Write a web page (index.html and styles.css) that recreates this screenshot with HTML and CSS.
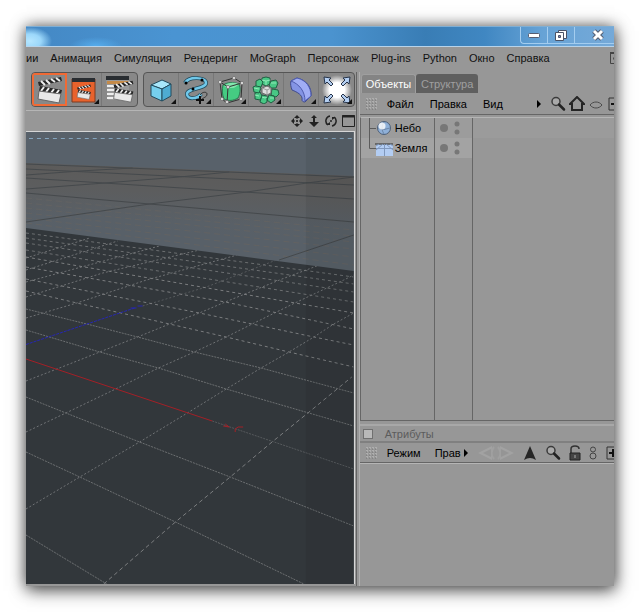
FILE: index.html
```html
<!DOCTYPE html>
<html lang="ru">
<head>
<meta charset="utf-8">
<title>3D</title>
<link rel="stylesheet" href="styles.css">
</head>
<body>
<svg class="defs" aria-hidden="true">
  <defs>
    <symbol id="lens" viewBox="0 0 16 16"><circle cx="6" cy="5.500" r="4" fill="#a9a9a9" stroke="#3b3b3b" stroke-width="1.500"/><path d="M9 8.500l5 5" stroke="#222" stroke-width="2.500" stroke-linecap="round"/></symbol>
    <symbol id="plus" viewBox="0 0 16 16"><path d="M2 2h13v12H2z" fill="none" stroke="#333"/><path d="M4 8h8M8 4v8" stroke="#111" stroke-width="2"/></symbol>
    <symbol id="grip" viewBox="0 0 12 12"><path d="M1 1h11M1 4h11M1 7h11M1 10h11" stroke="#c4c4c4" stroke-dasharray="2 1"/><path d="M1 2h11M1 5h11M1 8h11M1 11h11" stroke="#707070" stroke-dasharray="1 2"/></symbol>
    <symbol id="more" viewBox="0 0 6 8"><path d="M1 0l4 4-4 4z" fill="#000"/></symbol>
    <symbol id="slate" viewBox="0 0 28 28">
      <path d="M2 6L25 1l1 4L3 10z" fill="#262626"/><path d="M5 5l4 4M10 4l4 4M15 3l4 3M20 2l4 3" stroke="#eee" stroke-width="2"/>
      <path d="M4 10l22 4-1 4L3 15z" fill="#262626"/><path d="M8 11l-3 4M13 12l-3 4M18 13l-3 4M23 14l-3 4" stroke="#eee" stroke-width="2"/>
      <path d="M3 15l22 3-2 9-21-4z" fill="#e8e8e8" stroke="#666"/>
    </symbol>
  </defs>
</svg>
<main class="window">
  <header class="titlebar">
    <div class="caption">
      <button aria-label="Свернуть"><svg width="14" height="12" viewBox="0 0 14 12"><rect x="1.500" y="4.500" width="11" height="4" rx="1" fill="#fff" stroke="#555d70"/></svg></button>
      <button aria-label="Развернуть"><svg width="14" height="13" viewBox="0 0 14 13"><path d="M4.500 1.500h8v8h-8z" fill="#fff" stroke="#4a5266"/><path d="M1.500 3.500h8v8h-8z" fill="#fff" stroke="#4a5266"/><path d="M4.500 6.500h2v2h-2z" fill="#88b" stroke="#4a5266"/></svg></button>
      <button class="close" aria-label="Закрыть"><svg width="14" height="12" viewBox="0 0 14 12"><path d="M3 2l8 8M11 2l-8 8" stroke="#555d70" stroke-width="5"/><path d="M3 2l8 8M11 2l-8 8" stroke="#fff" stroke-width="3"/></svg></button>
    </div>
  </header>
  <nav class="menubar">
    <button>ии</button><button>Анимация</button><button>Симуляция</button><button>Рендеринг</button><button>MoGraph</button><button>Персонаж</button><button>Plug-ins</button><button>Python</button><button>Окно</button><button>Справка</button>
    <svg class="edge" width="14" height="14" viewBox="0 0 14 14"><path d="M1.500 2.500h12v10h-12z" fill="none" stroke="#444"/><path d="M1 2h12" stroke="#444" stroke-width="2"/><path d="M7 5L4 7.500 7 10" fill="none" stroke="#444"/></svg>
  </nav>
  <div class="work">
    <section class="left">
      <div class="tools">
        <div class="group">
          <button class="on" aria-label="Рендер вида"><svg width="28" height="28"><use href="#slate"/></svg></button>
          <button class="drop" aria-label="Рендер в окно"><svg width="28" height="28" viewBox="0 0 28 28"><path d="M2 3h23v23H2z" fill="#e8622c" stroke="#7d3a20"/><path d="M2 2h23v4H2z" fill="#292d31"/><use href="#slate" x="6" y="8" width="16" height="16"/></svg></button>
          <button aria-label="Настройки рендера"><svg width="30" height="30" viewBox="0 0 30 30"><path d="M1 3h23v22H3z" fill="#999"/><path d="M1 1h23v4H1z" fill="#292d31"/><path d="M2 6h22v3H2z" fill="#c48a48"/><path d="M2 11h7M2 15h7M2 19h7M2 23h7" stroke="#eee" stroke-width="2"/><use href="#slate" x="7" y="4" width="23" height="25"/></svg></button>
        </div>
        <div class="group wide">
          <button class="drop" aria-label="Куб"><svg width="28" height="28" viewBox="0 0 28 28"><g stroke="#234b5c" stroke-linejoin="round"><path d="M4 9l11-5 9 4-9 5z" fill="#a8e7fa"/><path d="M4 9l11 4v12L4 20z" fill="#76d0ee"/><path d="M15 13l9-5v12l-9 5z" fill="#4eacd2"/></g></svg></button>
          <button class="drop" aria-label="Сплайн"><svg width="28" height="28" viewBox="0 0 28 28"><path d="M3 7C7 0 24 1 24 7S5 12 5 18s11 5 14 0" fill="none" stroke="#234b5c" stroke-width="4"/><path d="M3 7C7 0 24 1 24 7S5 12 5 18s11 5 14 0" fill="none" stroke="#70c8ea" stroke-width="2.500"/><path d="M18 19c3-4 7-3 7-1 0 4-5 3-7 8" fill="none" stroke="#333"/><path d="M18 20v8M14 24h8" stroke="#111" stroke-width="2"/><circle cx="4" cy="7" r="1.500"/><circle cx="20" cy="4" r="1.500"/><circle cx="11" cy="13" r="1.500"/></svg></button>
          <button class="drop" aria-label="Генератор"><svg width="28" height="28" viewBox="0 0 28 28"><path d="M6 9c5-3 10-3 16-1 2 5 1 10-1 14-5 3-9 3-14 1C5 18 5 14 6 9z" fill="#45cb82" stroke="#287b51"/><path d="M7 10c5 2 6 2 8 2 3 0 5-2 7-4-5-2-11-2-15 2z" fill="#82e8ad"/><path d="M3 6l14-4 8 5-14 4zM3 6l2 17 5 4 14-4 1-16M11 11l-1 16" fill="none" stroke="#333"/><g fill="#fff" stroke="#777"><circle cx="3" cy="6" r="1.500"/><circle cx="17" cy="2" r="1.500"/><circle cx="25" cy="7" r="1.500"/><circle cx="11" cy="11" r="1.500"/><circle cx="5" cy="23" r="1.500"/><circle cx="10" cy="26" r="1.500"/><circle cx="24" cy="23" r="1.500"/></g></svg></button>
          <button class="drop" aria-label="Массив"><svg width="28" height="28" viewBox="0 0 28 28"><g fill="#48c885" stroke="#215f43" stroke-linejoin="round"><path d="M10 2l4-1 4 1v6l-4 2-4-2z"/><path d="M19 5l5-1 2 3-2 5-5 0-2-3z"/><path d="M20 13l6 1 1 4-3 3-5-2z"/><path d="M17 19l5 1 1 4-4 3-4-3z"/><path d="M10 19l5 1v6l-3 2-4-2z"/><path d="M3 17l5-1 2 4-2 4-5-1z"/><path d="M1 11l5-2 3 3-2 5-5-1z"/><path d="M4 5l4-2 3 3-2 5-5-1z"/></g><path d="M10 4l4 1 4-1M14 5v4M19 7l5 0M3 19l4 1M2 12l5 1M18 22l4 0M10 21l3 1 2-1" stroke="#92eab8" fill="none"/><path d="M10 12l5-2 4 2v5l-4 2-5-2z" fill="#ddd" stroke="#666"/><path d="M10 12l5 2 4-2M15 14v5" fill="none" stroke="#999"/></svg></button>
          <button class="drop" aria-label="Деформатор"><svg width="28" height="28" viewBox="0 0 28 28"><path d="M4 5l6-3c9 2 15 9 14 18l-6 6c-2 0-3-1-3-2 1-5-5-8-10-10-1-3-2-6-1-9z" fill="#8494e4" stroke="#3f4a8c"/><path d="M4 5l6-3c9 2 14 9 14 18l-6 5C18 15 12 8 4 5z" fill="#a0adf4" stroke="#4f5cae"/></svg></button>
          <button class="drop" aria-label="Окружение"><svg width="30" height="30" viewBox="0 0 30 30"><defs><radialGradient id="glow"><stop offset=".5" stop-color="#fff"/><stop offset="1" stop-color="#fff" stop-opacity="0"/></radialGradient></defs><circle cx="15" cy="15" r="15" fill="url(#glow)"/><g fill="#b4cff2" stroke="#26344a" stroke-linejoin="round"><path id="arr" d="M2 2l7 1-2 2 4 4-2 2-4-4-2 2z"/><use href="#arr" transform="matrix(-1 0 0 1 30 0)"/><use href="#arr" transform="matrix(1 0 0 -1 0 30)"/><use href="#arr" transform="matrix(-1 0 0 -1 30 30)"/></g></svg></button>
        </div>
      </div>
      <div class="viewbar">
        <svg width="12" height="12" viewBox="0 0 12 12"><path d="M6 0l3 3H3zM6 12l3-3H3zM0 6l3-3v6zM12 6L9 3v6z" fill="#222"/><path d="M6 2v8M2 6h8" stroke="#222"/><path d="M4 4h4v4H4z" fill="#999"/><path d="M5 5h2v2H5z" fill="#333"/></svg>
        <svg width="12" height="12" viewBox="0 0 12 12"><path d="M6 0l3 3H7v4h4l-5 5-5-5h4V3H3z" fill="#222"/></svg>
        <svg width="12" height="12" viewBox="0 0 12 12"><path d="M5 1a5 5 0 0 0-2 9M7 11a5 5 0 0 0 2-9" fill="none" stroke="#222" stroke-width="1.500"/><path d="M1 10h4V7zM11 2H7v3z" fill="#222"/><circle cx="6" cy="6" r="1" fill="#222"/></svg>
        <svg width="13" height="12" viewBox="0 0 13 12"><path d="M.5.500h12v11H.5z" fill="none" stroke="#222"/><path d="M0 1.500h13" stroke="#222" stroke-width="2"/></svg>
      </div>
      <svg class="scene" viewBox="26 132 329 452" preserveAspectRatio="none" role="img" aria-label="3D">
        <defs>
          <linearGradient id="haze" x1="30" y1="163" x2="27" y2="228" gradientUnits="userSpaceOnUse"><stop offset="0" stop-color="#5c5b5a"/><stop offset=".35" stop-color="#5c5d5e"/><stop offset=".8" stop-color="#596067"/><stop offset="1" stop-color="#586068"/></linearGradient>
          <clipPath id="floor"><path d="M26 228L355 271V584H26z"/></clipPath>
        </defs>
        <path d="M26 132h329v452H26z" fill="#58616a"/>
        <path d="M26 163L355 176V275L26 230z" fill="url(#haze)"/>
        <path d="M29 138.500h326" stroke="#86a6bf" stroke-dasharray="4 4"/>
        <g fill="none" stroke="#626262" stroke-dasharray="6 4"><path d="M26 198L355 230M26 203L355 236M26 208L355 242M26 213L355 249M26 218L355 257M26 223L355 265"/></g>
        <g fill="none" stroke="#45494c"><path d="M26 164L355 177M26 169L355 185M26 178L245 192 355 199M26 193L150 204 355 222M26 222L150 204 248 192 308 183 355 177M26 189L105 183 180 177 230 172M26 175L80 171 133 168M280 260L355 235"/></g>
        <path d="M26 228L355 271V584H26z" fill="#32373b"/>
        <g clip-path="url(#floor)" fill="none" stroke="#7b7d7f">
          <g stroke-dasharray="2 1" stroke-opacity=".8">
            <path d="M26 535L107 584"/>
            <path d="M26 452L80 477 176 522 305 584"/>
            <path d="M26 397L66 413 140 442 231 477 355 526"/>
            <path d="M213 421L355 469" stroke-opacity=".5"/>
            <path d="M26 330L100 352 159 368 227 389 310 413 355 426"/>
            <path d="M26 309L87 324 138 337 195 352 262 368 355 393"/>
          </g>
          <g stroke-dasharray="3 3">
            <path d="M26 291L77 303 170 324 227 337 290 352 355 367"/>
            <path d="M26 279L200 313 253 324 315 337 355 345"/>
            <path d="M26 267L226 302 355 329"/>
            <path d="M26 257L355 313"/>
            <path d="M26 250L355 302M26 243L355 292M26 238L355 284M26 233L355 277" stroke-opacity=".8"/>
          </g>
          <path d="M104 584L176 522 231 477 273 442 309 413 353 377" stroke-dasharray="4 3"/>
          <g stroke-dasharray="2 2" stroke-opacity=".85">
            <path d="M26 509L80 477 140 442 188 413 227 389 262 368 290 352 315 337 335 324 355 313"/>
            <path d="M26 432L66 413 116 389 159 368 195 352 227 337 253 324 298 302 345 280 355 275"/>
            <path d="M26 381L57 369 100 352 138 337 170 324 200 313 226 302 283 279 318 266"/>
            <path d="M143 306L207 287 280 259" stroke-opacity=".5"/>
            <path d="M26 318L77 303 147 280 238 255"/>
            <path d="M26 297L103 273 200 250M26 282L130 254 160 246M26 270L118 241M26 258L90 238"/>
          </g>
        </g>
        <path d="M26 359L213 421" stroke="#a32027"/>
        <path d="M224 426l6 1-4-3M236 432v-3l3-2h5" fill="none" stroke="#a32027"/>
        <path d="M26 344.500L135 308" stroke="#2626b4" stroke-dasharray="3 1"/><path d="M131 308h6M138 306h5" stroke="#2626b4"/>
        <path d="M307 132h48v452h-48z" fill="#000" opacity=".06"/>
      </svg>
    </section>
    <aside class="right">
      <div class="tabs" role="tablist"><button class="active" role="tab">Объекты</button><button role="tab">Структура</button></div>
      <div class="bar">
        <svg width="12" height="12"><use href="#grip"/></svg>
        <button>Файл</button><button>Правка</button><button>Вид</button>
        <div class="icons">
          <svg class="next" width="6" height="8"><use href="#more"/></svg>
          <svg width="16" height="16"><use href="#lens"/></svg>
          <svg width="16" height="16" viewBox="0 0 16 16"><path d="M1 8l7-7 7 7h-2v6H3V8z" fill="none" stroke="#252525" stroke-width="2"/></svg>
          <svg class="eye" width="14" height="16" viewBox="0 0 14 16"><path d="M1 9c3-4 9-4 12 0-3 4-9 4-12 0z" fill="none" stroke="#4b4b4b"/></svg>
          <svg width="16" height="16"><use href="#plus"/></svg>
        </div>
      </div>
      <div class="objects">
        <div class="names">
          <div class="row"><svg width="30" height="20" viewBox="0 0 30 20"><path d="M8.500 0v20M8.500 10.500H15" stroke="#5c5c5c"/><circle cx="23" cy="10" r="6.500" fill="#8fb0d8" stroke="#4e6078"/><path d="M17 10q6 3 12 0M23 4q-4 6 0 12" fill="none" stroke="#6d87a8"/><circle cx="21" cy="8" r="3.500" fill="#fff" opacity=".8"/></svg><span>Небо</span></div>
          <div class="row"><svg width="32" height="20" viewBox="0 0 32 20"><path d="M8.500 0v10.500H15" fill="none" stroke="#5c5c5c"/><path d="M15 6h17v12H15z" fill="#b3cdf3"/><path d="M14 6h18" stroke="#555" stroke-width="1.500"/><path d="M15 10.500h17M23.500 6v12M22 6l-7 6M25 6l7 6M18 6l-3 2M29 6l3 2" stroke="#8098bd"/></svg><span>Земля</span></div>
        </div>
        <div class="flags">
          <div class="row"><svg width="28" height="20" viewBox="0 0 28 20"><g fill="#777"><circle cx="9" cy="10" r="4"/><circle cx="22" cy="6" r="2.500"/><circle cx="22" cy="14" r="2.500"/></g></svg></div>
          <div class="row"><svg width="28" height="20" viewBox="0 0 28 20"><g fill="#777"><circle cx="9" cy="10" r="4"/><circle cx="22" cy="6" r="2.500"/><circle cx="22" cy="14" r="2.500"/></g></svg></div>
        </div>
        <div class="tags"></div>
      </div>
      <div class="attr">
        <h2><i></i>Атрибуты</h2>
        <div class="bar">
          <svg width="12" height="12"><use href="#grip"/></svg>
          <button>Режим</button><button>Прав</button>
          <div class="icons">
            <svg width="6" height="8"><use href="#more"/></svg>
            <svg width="38" height="16" viewBox="0 0 38 16"><g fill="#a2a2a2"><path d="M1 8l14-7v14z"/><path d="M37 8L23 1v14z"/></g><path d="M17 2q-5 6 0 12M21 2q5 6 0 12" fill="none" stroke="#a0a0a0" stroke-width="2"/><path d="M6 8l8-4v8zM32 8l-8-4v8z" fill="#959595"/></svg>
            <svg width="14" height="16" viewBox="0 0 14 16"><path d="M7 1l6 14q-6-4-12 0z" fill="#262626"/></svg>
            <svg width="16" height="16"><use href="#lens"/></svg>
            <svg width="12" height="16" viewBox="0 0 12 16"><path d="M2 8V4q0-3 4-3t4 3" fill="none" stroke="#333" stroke-width="1.500"/><path d="M1 8h10v7H1z" fill="#444" stroke="#222"/><path d="M6 10v3" stroke="#aaa"/></svg>
            <svg width="8" height="16" viewBox="0 0 8 16"><circle cx="4" cy="4.500" r="2.500" fill="none" stroke="#444"/><circle cx="4" cy="11" r="3" fill="none" stroke="#444"/></svg>
            <svg width="16" height="16"><use href="#plus"/></svg>
          </div>
        </div>
      </div>
    </aside>
  </div>
</main>
</body>
</html>
```
FILE: styles.css
```css
* { box-sizing: border-box; }
body {
  margin: 0;
  padding: 26px;
  min-height: 100vh;
  display: flex;
  background: #fff;
  font: 11px/16px "Liberation Sans", Arial, sans-serif;
  color: #000;
}
button {
  border: 0;
  margin: 0;
  padding: 0;
  background: none;
  font: inherit;
  color: inherit;
  white-space: nowrap;
}
svg { display: block; flex: none; }
.defs { position: absolute; width: 0; height: 0; }

.window {
  flex: 1;
  min-width: 0;
  display: flex;
  flex-direction: column;
  overflow: hidden;
  background: #979797;
  box-shadow: 0 0 14px rgba(0, 0, 0, .5), 1px 5px 16px rgba(0, 0, 0, .5);
}
.titlebar {
  height: 20px;
  display: flex;
  justify-content: flex-end;
  border-top: 1px solid #7eaed4;
  background:
    radial-gradient(ellipse 22px 14px at 4px 14px, #b5e6ff, #9bd7fa 50%, transparent),
    radial-gradient(ellipse 26px 9px at 70px 19px, #55acec, transparent),
    linear-gradient(90deg, #4488c4, #4a94d2 25%, #4b93cf 52%, #397db5 68%, #4087c2 78%, #67a3d6 88%, #75a9d8);
}
.caption {
  display: flex;
  height: 17px;
  border: solid #a4cdef;
  border-width: 0 0 1px 1px;
  border-radius: 0 0 0 4px;
}
.caption button {
  width: 27px;
  display: grid;
  place-items: center;
  border-right: 1px solid #a4cdef;
}
.caption .close { width: 39px; padding-left: 6px; border: 0; }

.menubar {
  height: 26px;
  display: flex;
  align-items: center;
  gap: 12px;
  padding-bottom: 4px;
  border-top: 1px solid #b7d3ea;
  color: #111;
}
.edge { margin: 0 -9px 0 auto; }

.work { flex: 1; display: flex; min-height: 0; }
.left {
  flex: 332 1 0;
  min-width: 0;
  display: flex;
  flex-direction: column;
  border-right: 1px solid #636363;
  padding-bottom: 2px;
}
.tools {
  display: flex;
  gap: 5px;
  padding-left: 5px;
  height: 39px;
  overflow: hidden;
  border-bottom: 1px solid #b5b5b5;
}
.group {
  display: flex;
  flex: none;
  height: 35px;
  border: 1px solid #555;
  border-radius: 4px;
  background: #888;
  overflow: hidden;
}
.group button {
  position: relative;
  width: 35px;
  display: grid;
  place-items: center;
  border-right: 1px solid #777;
}
.group button:last-child { border-right: 0; }
.group .on { border: 2px solid #f06a35; }
.drop::after {
  content: "";
  position: absolute;
  right: 2px;
  bottom: 2px;
  border-style: solid;
  border-width: 0 0 5px 5px;
  border-color: transparent transparent #111;
}
.viewbar {
  height: 20px;
  display: flex;
  align-items: center;
  justify-content: flex-end;
  gap: 5px;
  padding-right: 1px;
}
.scene {
  flex: 1 1 0;
  min-height: 0;
  width: calc(100% - 1px);
  border: solid #d6d6d6;
  border-width: 1px 1px 0 0;
}

.right {
  flex: 256 1 0;
  min-width: 0;
  display: flex;
  flex-direction: column;
  margin-left: 2px;
  border-left: 1px solid #b0b0b0;
}
.tabs { display: flex; height: 21px; padding: 2px 0 0 1px; }
.tabs button {
  padding: 0 5px;
  border-radius: 3px 3px 0 0;
  background: #5f5f5f;
  color: #a0a0a0;
}
.tabs .active { padding: 0 4px; background: #848484; color: #fff; border: 1px solid #9f9f9f; border-bottom: 0; }
.bar {
  height: 22px;
  display: flex;
  align-items: center;
  gap: 16px;
  padding-left: 5px;
  overflow: hidden;
  border-bottom: 1px solid #666;
}
.bar button { flex: none; }
.bar button:nth-of-type(1) { margin-left: -6px; }
.icons { display: flex; flex: none; align-items: center; gap: 3px; margin: 0 -9px 0 auto; }
.next { margin-right: 5px; }
.icons .eye { margin: 0 1px; }
.objects {
  flex: 308 1 0;
  margin-top: 2px;
  display: flex;
  border: solid #666;
  border-width: 0 0 1px 1px;
  border-top: 1px solid #b5b5b5;
}
.names { flex: 73 1 0; border-right: 1px solid #666; }
.flags { flex: 38 1 0; border-right: 1px solid #666; }
.tags { flex: 141 1 0; background: linear-gradient(#9b9b9b 20px, transparent 20px); }
.row { height: 20px; display: flex; align-items: center; gap: 4px; background: #9c9c9c; }
.row + .row { gap: 2px; background: #a3a3a3; }
.attr { flex: 163 1 0; margin-top: 3px; border-top: 2px solid #a8a8a8; }
.attr h2 {
  margin: 0;
  height: 17px;
  display: flex;
  align-items: center;
  gap: 12px;
  padding-left: 3px;
  font: inherit;
  color: #5c5c5c;
  border-bottom: 2px solid #808080;
}
.attr h2 i { width: 10px; height: 10px; background: #b9b9b9; border: 1px solid #707070; }
.attr .bar { height: 20px; gap: 14px; box-shadow: 0 1px #b5b5b5; }
.attr .bar button:nth-of-type(1) { margin-left: -4px; }
.attr .icons { gap: 8px; margin-left: -12px; }
```
